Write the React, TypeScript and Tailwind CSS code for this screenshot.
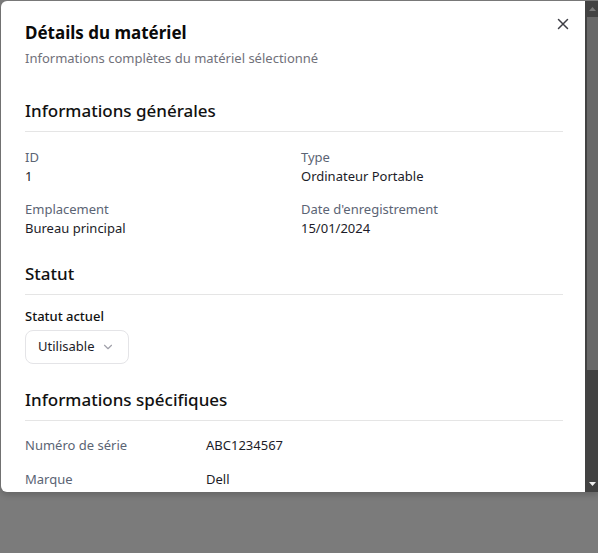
import React from "react";

const font = { fontFamily: '"Noto Sans", "Open Sans", sans-serif' };

function Field({ label, value }: { label: string; value: string }) {
  return (
    <div className="flex flex-col">
      <span className="text-[13px] leading-[18px] text-[#5b6474]">{label}</span>
      <span className="text-[13px] leading-[20px] text-[#1c1c28]">{value}</span>
    </div>
  );
}

function Section({ title }: { title: string }) {
  return (
    <div className="border-b border-[#e5e5e5] pb-[6px]">
      <h3 className="text-[17px] leading-[28px] font-medium text-[#111111]">{title}</h3>
    </div>
  );
}

function Scrollbar() {
  return (
    <div className="w-[13px] shrink-0 bg-[#424242] flex flex-col">
      <div className="h-[16px] flex items-center justify-center pl-[2px]">
        <svg width="7" height="4" viewBox="0 0 7 4">
          <path d="M0 4 L3.5 0 L7 4 Z" fill="#7a7a7a" />
        </svg>
      </div>
      <div className="ml-[2px] h-[353px] bg-[#686868]" />
      <div className="flex-1" />
      <div className="h-[16px] flex items-center justify-center pl-[2px]">
        <svg width="7" height="4" viewBox="0 0 7 4">
          <path d="M0 0 L7 0 L3.5 4 Z" fill="#f0f0f0" />
        </svg>
      </div>
    </div>
  );
}

export default function App() {
  return (
    <div className="relative w-[598px] h-[553px] overflow-hidden bg-[#7b7b7b]" style={font}>
      <div className="ml-[1px] mt-[1px] w-[597px] h-[491px] bg-white rounded-l-md shadow-[0_3px_6px_rgba(0,0,0,0.18)] overflow-hidden flex">
        <div className="relative flex-1 min-w-0 overflow-hidden pl-6 pr-[22px] pt-[18px]">
          <button className="absolute right-[12px] top-[13px] w-[20px] h-[20px] flex items-center justify-center text-[#3f3f46]">
            <svg width="20" height="20" viewBox="0 0 20 20" fill="none" stroke="currentColor" strokeWidth="1.5" strokeLinecap="round">
              <path d="M5.5 5.5 L14.5 14.5 M14.5 5.5 L5.5 14.5" />
            </svg>
          </button>
          <h2 className="text-[17px] leading-[28px] font-bold text-[#0a0a0a]">Détails du matériel</h2>
          <p className="mt-[1px] text-[13px] leading-[20px] text-[#71717a]">
            Informations complètes du matériel sélectionné
          </p>

          <div className="mt-[29px]">
            <Section title="Informations générales" />
            <div className="mt-[16px] grid grid-cols-2 gap-x-[14px] gap-y-[14px]">
              <Field label="ID" value="1" />
              <Field label="Type" value="Ordinateur Portable" />
              <Field label="Emplacement" value="Bureau principal" />
              <Field label="Date d'enregistrement" value="15/01/2024" />
            </div>
          </div>

          <div className="mt-[22px]">
            <Section title="Statut" />
            <div className="mt-[11px]">
              <div className="text-[13px] leading-[20px] font-medium text-[#111111]">Statut actuel</div>
              <button className="mt-[4px] h-[34px] flex items-center gap-[7px] pl-3 pr-[13px] border border-[#e4e4e7] rounded-lg text-[13px] text-[#1c1c28]">
                <span>Utilisable</span>
                <svg width="14" height="14" viewBox="0 0 24 24" fill="none" stroke="#a1a1aa" strokeWidth="2" strokeLinecap="round" strokeLinejoin="round">
                  <path d="m6 9 6 6 6-6" />
                </svg>
              </button>
            </div>
          </div>

          <div className="mt-[22px]">
            <Section title="Informations spécifiques" />
            <div className="mt-[14px] flex flex-col gap-[14px]">
              {[
                ["Numéro de série", "ABC1234567"],
                ["Marque", "Dell"],
              ].map(([k, v]) => (
                <div key={k} className="flex text-[13px] leading-[20px]">
                  <span className="w-[181px] text-[#5b6474]">{k}</span>
                  <span className="text-[#1c1c28]">{v}</span>
                </div>
              ))}
            </div>
          </div>
        </div>
        <Scrollbar />
      </div>
    </div>
  );
}
